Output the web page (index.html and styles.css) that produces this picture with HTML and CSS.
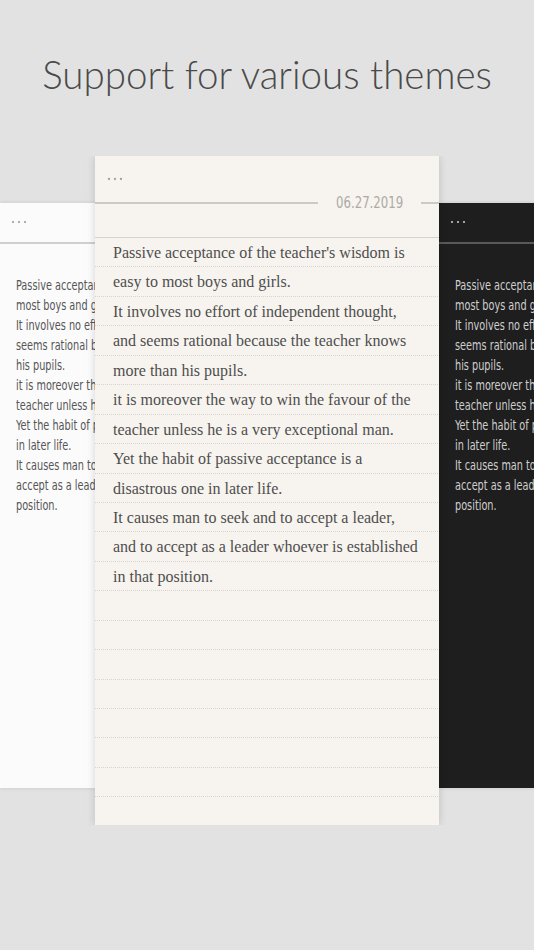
FILE: index.html
```html
<!DOCTYPE html>
<html>
<head>
<meta charset="utf-8">
<link rel="stylesheet" href="styles.css">
</head>
<body>
<h1 class="title">Support for various themes</h1>
<div class="stage">
  <div class="side-card light">
    <div class="dots"><svg width="16" height="4" viewBox="0 0 16 4"><circle cx="2" cy="2" r="1.1"/><circle cx="8" cy="2" r="1.1"/><circle cx="14" cy="2" r="1.1"/></svg></div>
    <div class="side-rule"></div>
    <div class="side-text">
      <span>Passive acceptance of the teacher's wisdom is easy to</span>
      <span>most boys and girls.</span>
      <span>It involves no effort of independent thought, and</span>
      <span>seems rational because the teacher knows more than</span>
      <span>his pupils.</span>
      <span>it is moreover the way to win the favour of the</span>
      <span>teacher unless he is a very exceptional man.</span>
      <span>Yet the habit of passive acceptance is a disastrous one</span>
      <span>in later life.</span>
      <span>It causes man to seek and to accept a leader, and to</span>
      <span>accept as a leader whoever is established in that</span>
      <span>position.</span>
    </div>
  </div>
  <div class="main-card">
    <div class="dots main-dots"><svg width="16" height="4" viewBox="0 0 16 4"><circle cx="2" cy="2" r="1.15"/><circle cx="8" cy="2" r="1.15"/><circle cx="14" cy="2" r="1.15"/></svg></div>
    <div class="date-row">
      <span class="date-line grow"></span>
      <span class="date"><span class="date-text">06.27.2019</span></span>
      <span class="date-line end"></span>
    </div>
    <div class="lined">
      <span>Passive acceptance of the teacher's wisdom is</span>
      <span>easy to most boys and girls.</span>
      <span>It involves no effort of independent thought,</span>
      <span>and seems rational because the teacher knows</span>
      <span>more than his pupils.</span>
      <span>it is moreover the way to win the favour of the</span>
      <span>teacher unless he is a very exceptional man.</span>
      <span>Yet the habit of passive acceptance is a</span>
      <span>disastrous one in later life.</span>
      <span>It causes man to seek and to accept a leader,</span>
      <span>and to accept as a leader whoever is established</span>
      <span>in that position.</span>
    </div>
  </div>
  <div class="side-card dark">
    <div class="dots"><svg width="16" height="4" viewBox="0 0 16 4"><circle cx="2" cy="2" r="1.1"/><circle cx="8" cy="2" r="1.1"/><circle cx="14" cy="2" r="1.1"/></svg></div>
    <div class="side-rule"></div>
    <div class="side-text">
      <span>Passive acceptance of the teacher's wisdom is easy to</span>
      <span>most boys and girls.</span>
      <span>It involves no effort of independent thought, and</span>
      <span>seems rational because the teacher knows more than</span>
      <span>his pupils.</span>
      <span>it is moreover the way to win the favour of the</span>
      <span>teacher unless he is a very exceptional man.</span>
      <span>Yet the habit of passive acceptance is a disastrous one</span>
      <span>in later life.</span>
      <span>It causes man to seek and to accept a leader, and to</span>
      <span>accept as a leader whoever is established in that</span>
      <span>position.</span>
    </div>
  </div>
</div>
</body>
</html>
```
FILE: styles.css
```css
html, body {
  margin: 0;
  padding: 0;
}
body {
  width: 534px;
  height: 950px;
  overflow: hidden;
  background: #e2e2e2;
}
.title {
  margin: 50px 0 0;
  height: 48px;
  font-family: "Lato", "Liberation Sans", sans-serif;
  font-weight: 300;
  font-size: 38.5px;
  line-height: 48px;
  color: #4a4a4a;
  text-align: center;
  letter-spacing: 0;
}
.stage {
  margin-top: 58px;
  width: 534px;
  display: grid;
  grid-template-columns: 95px 344px 95px;
  align-items: start;
  overflow: hidden;
}
.side-card {
  grid-row: 1;
  width: 300px;
  height: 585px;
  margin-top: 47px;
  justify-self: start;
  box-sizing: border-box;
  box-shadow: 0 0 4px rgba(0,0,0,0.12);
}
.side-card.light {
  grid-column: 1 / span 2;
  background: #fbfbfb;
  color: #555;
}
.side-card.dark {
  grid-column: 3;
  background: #1e1e1e;
  color: #cfcfcf;
}
.dots {
  display: block;
  height: 4px;
  padding: 17px 0 0 11px;
}
.dots svg {
  display: block;
}
.light .dots svg { fill: #9c9c9c; }
.dark .dots svg { fill: #c4c4c4; }
.side-rule {
  height: 2px;
  margin-top: 18px;
}
.light .side-rule { background: #cfcfcf; }
.dark .side-rule { background: #595959; }
.side-text {
  margin-top: 31px;
  padding-left: 16px;
  font-family: "DejaVu Sans Condensed", "DejaVu Sans", sans-serif;
  font-stretch: condensed;
  font-size: 13.5px;
  line-height: 20px;
  white-space: nowrap;
  transform: scaleX(0.8);
  transform-origin: 16px 0;
}
.side-text span, .lined span {
  display: block;
}
.main-card {
  grid-row: 1;
  grid-column: 2;
  position: relative;
  z-index: 1;
  height: 669px;
  background: #f7f4ef;
  box-shadow: 0 0 8px rgba(0,0,0,0.16);
}
.main-dots {
  padding: 21px 0 0 107px;
  padding-left: 107px;
}
.main-dots {
  padding-left: 12px;
}
.main-dots svg { fill: #a3a19d; }
.date-row {
  display: flex;
  align-items: center;
  height: 20px;
  margin-top: 12px;
}
.date-line {
  height: 2px;
  background: #cdcac5;
}
.date-line.grow { flex: 1; }
.date-line.end { width: 18px; }
.date {
  width: 67px;
  margin: 0 18px;
  white-space: nowrap;
  font-family: "DejaVu Sans Condensed", "DejaVu Sans", sans-serif;
  font-stretch: condensed;
  font-size: 15px;
  line-height: 20px;
  color: #adaaa6;
}
.date-text {
  display: inline-block;
  transform: scaleX(0.87);
  transform-origin: 0 50%;
}
.lined {
  margin-top: 24px;
  border-top: 1px dotted #d6d2cc;
  height: 559.36px;
  padding-left: 18px;
  font-family: "Liberation Serif", serif;
  font-size: 16px;
  line-height: 29.44px;
  color: #4e4e4e;
  white-space: nowrap;
  background-image:
    repeating-linear-gradient(to bottom, #f7f4ef 0, #f7f4ef 28.44px, transparent 28.44px, transparent 29.44px),
    repeating-linear-gradient(to right, #d6d2cc 0, #d6d2cc 1px, #f7f4ef 1px, #f7f4ef 2px);
}
```
